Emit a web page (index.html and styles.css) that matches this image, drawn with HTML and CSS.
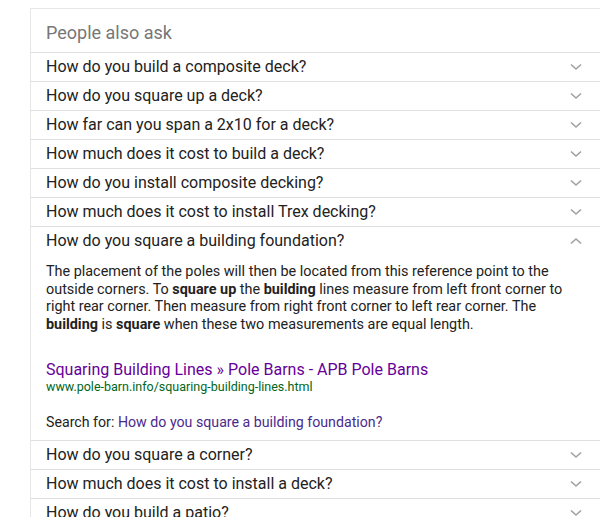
FILE: index.html
```html
<!DOCTYPE html>
<html>
<head>
<meta charset="utf-8">
<link rel="stylesheet" href="styles.css">
</head>
<body>
<div class="card">
  <div class="heading">People also ask</div>
  <div class="row"><span class="q">How do you build a composite deck?</span><svg class="chev" viewBox="0 0 12 8"><path d="M1 1.5 L6 6 L11 1.5"/></svg></div>
  <div class="row"><span class="q">How do you square up a deck?</span><svg class="chev" viewBox="0 0 12 8"><path d="M1 1.5 L6 6 L11 1.5"/></svg></div>
  <div class="row"><span class="q">How far can you span a 2x10 for a deck?</span><svg class="chev" viewBox="0 0 12 8"><path d="M1 1.5 L6 6 L11 1.5"/></svg></div>
  <div class="row"><span class="q">How much does it cost to build a deck?</span><svg class="chev" viewBox="0 0 12 8"><path d="M1 1.5 L6 6 L11 1.5"/></svg></div>
  <div class="row"><span class="q">How do you install composite decking?</span><svg class="chev" viewBox="0 0 12 8"><path d="M1 1.5 L6 6 L11 1.5"/></svg></div>
  <div class="row"><span class="q">How much does it cost to install Trex decking?</span><svg class="chev" viewBox="0 0 12 8"><path d="M1 1.5 L6 6 L11 1.5"/></svg></div>
  <div class="expanded">
    <div class="row open"><span class="q">How do you square a building foundation?</span><svg class="chev" viewBox="0 0 12 8"><path d="M1 6.5 L6 2 L11 6.5"/></svg></div>
    <div class="answer">
      <p class="text">The placement of the poles will then be located from this reference point to the outside corners. To <b>square up</b> the <b>building</b> lines measure from left front corner to right rear corner. Then measure from right front corner to left rear corner. The <b>building</b> is <b>square</b> when these two measurements are equal length.</p>
      <div class="source">
        <a class="title">Squaring Building Lines » Pole Barns - APB Pole Barns</a>
        <div class="url">www.pole-barn.info/squaring-building-lines.html</div>
      </div>
      <div class="search">Search for: <a class="slink">How do you square a building foundation?</a></div>
    </div>
  </div>
  <div class="row"><span class="q">How do you square a corner?</span><svg class="chev" viewBox="0 0 12 8"><path d="M1 1.5 L6 6 L11 1.5"/></svg></div>
  <div class="row"><span class="q">How much does it cost to install a deck?</span><svg class="chev" viewBox="0 0 12 8"><path d="M1 1.5 L6 6 L11 1.5"/></svg></div>
  <div class="row"><span class="q">How do you build a patio?</span><svg class="chev" viewBox="0 0 12 8"><path d="M1 1.5 L6 6 L11 1.5"/></svg></div>
</div>
</body>
</html>
```
FILE: styles.css
```css
html, body {
  margin: 0;
  padding: 0;
  background: #fff;
  overflow: hidden;
}
body {
  font-family: Roboto, "Liberation Sans", Arial, sans-serif;
  color: #222;
}
.card {
  margin: 8px 0 0 30px;
  width: 620px;
  border: 1px solid #e6e6e6;
  border-right: none;
  box-sizing: border-box;
}
.heading {
  height: 44px;
  box-sizing: border-box;
  padding: 12px 0 0 15px;
  font-size: 18px;
  line-height: 24px;
  color: #777;
  border-bottom: 1px solid #e0e0e0;
}
.row {
  display: flex;
  align-items: center;
  height: 29px;
  box-sizing: border-box;
  padding: 0 0 0 15px;
  border-bottom: 1px solid #e0e0e0;
}
.row.open {
  border-bottom: none;
  height: 28px;
}
.q {
  flex: 1;
  font-size: 16px;
  line-height: 20px;
  color: #222;
  white-space: nowrap;
}
.chev {
  width: 12px;
  height: 8px;
  margin-right: 68px;
  fill: none;
  stroke: #a0a0a0;
  stroke-width: 1.6;
}
.expanded {
  border-bottom: 1px solid #e0e0e0;
}
.answer {
  padding: 8px 0 10px 15px;
  width: 522px;
}
.text {
  margin: 0;
  font-size: 14.4px;
  line-height: 17.5px;
  color: #222;
}
.text b {
  font-weight: 700;
}
.source {
  margin-top: 27px;
}
.title {
  display: block;
  font-size: 16px;
  line-height: 20px;
  color: #609;
  text-decoration: none;
}
.url {
  font-size: 12.5px;
  line-height: 14px;
  color: #006621;
}
.search {
  margin-top: 20px;
  font-size: 14.2px;
  line-height: 16px;
  color: #222;
}
.slink {
  color: #4a2a8c;
  text-decoration: none;
}
```
